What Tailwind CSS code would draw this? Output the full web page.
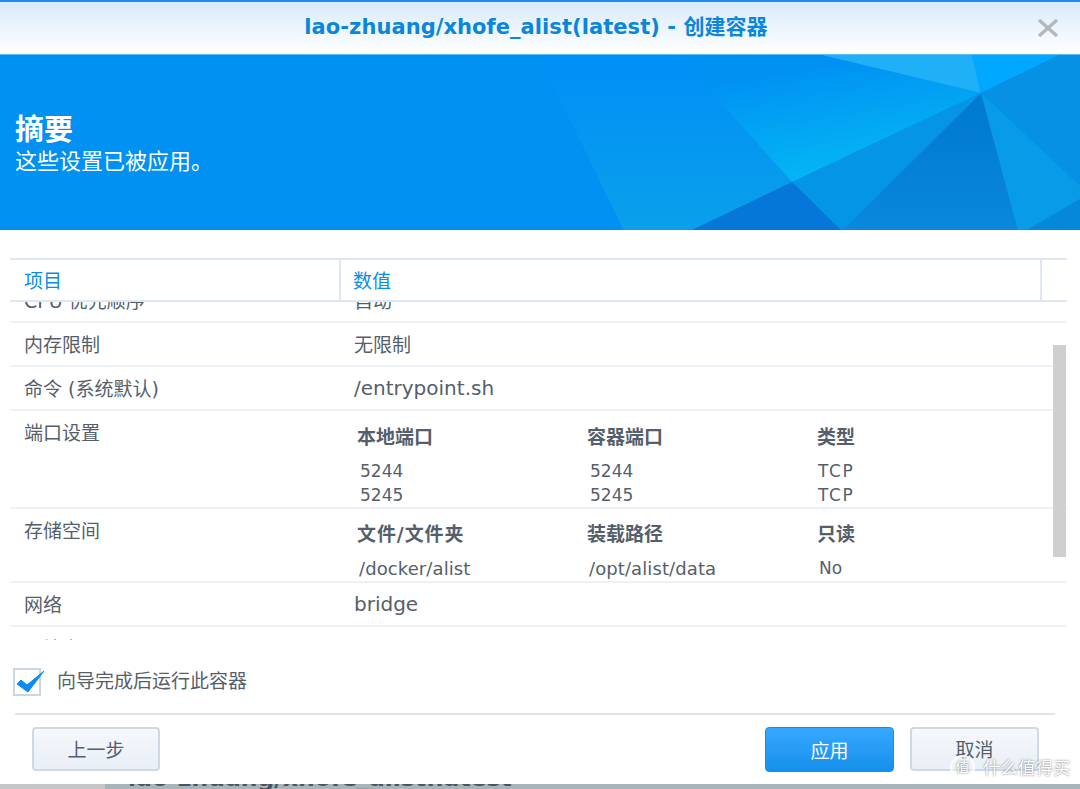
<!DOCTYPE html>
<html lang="en">
<head>
    <meta charset="UTF-8">
    <title>创建容器</title>
    <script src="https://cdn.jsdelivr.net/npm/@tailwindcss/browser@4"></script>
</head>
<body class="bg-white">
    <div class="relative flex flex-col w-[1080px] h-[789px] overflow-hidden bg-white font-['DejaVu_Sans','Noto_Sans_CJK_SC',sans-serif] text-[19px] text-[#555f6b]">
        <!-- Title bar -->
        <div class="relative flex items-center justify-center h-[54px] shrink-0 pr-[8px] border-t-2 border-[#1a8fee] bg-gradient-to-b from-[#d8ebfb] to-white">
            <h1 class="text-[21px] font-semibold tracking-[0.06px] text-[#0a86dc]">lao-zhuang/xhofe_alist(latest) - 创建容器</h1>
            <svg class="absolute right-[21px] top-[17px]" width="22" height="18" viewBox="0 0 22 18"><path d="M2 1 L20 17 M20 1 L2 17" stroke="#b4b8bc" stroke-width="3.4" fill="none"/></svg>
        </div>

        <!-- Banner -->
        <div class="relative flex flex-col justify-center h-[176px] shrink-0 pl-[15px] pt-[1px] overflow-hidden bg-[#0091f2] border-t border-[#5cbcf5]">
            <svg class="absolute inset-0" width="1080" height="176" viewBox="0 54 1080 176">
                <defs>
                    <linearGradient id="g1" x1="0" y1="0" x2="0" y2="1"><stop offset="0" stop-color="#008ff8"/><stop offset="1" stop-color="#0aa0ea"/></linearGradient>
                    <linearGradient id="g2" x1="0.2" y1="0" x2="0.6" y2="1"><stop offset="0.15" stop-color="#0091f3"/><stop offset="1" stop-color="#05baf4"/></linearGradient>
                    <linearGradient id="g3" x1="0" y1="0" x2="0" y2="1"><stop offset="0" stop-color="#0078d0"/><stop offset="1" stop-color="#0988dc"/></linearGradient>
                </defs>
                <polygon points="539,54 678,54 792,181 690,230 624,230" fill="url(#g1)"/>
                <polygon points="678,54 822,54 981,92 792,181" fill="url(#g2)"/>
                <polygon points="822,54 972,54 981,92" fill="#1fb0f8"/>
                <polygon points="972,54 1059,54 981,92" fill="#00a8ff"/>
                <polygon points="1059,54 1080,54 1080,185 981,92" fill="#0791e5"/>
                <polygon points="981,92 1080,185 1080,198 1025,230 1018,230" fill="#089ce8"/>
                <polygon points="981,92 1018,230 842,230" fill="url(#g3)"/>
                <polygon points="981,92 842,230 792,181" fill="#0595e6"/>
                <polygon points="792,181 842,230 690,230" fill="#0577d8"/>
                <polygon points="1080,198 1080,230 1025,230" fill="#0588d8"/>
            </svg>
            <div class="relative text-white">
                <h2 class="text-[29px] leading-[38px] font-bold">摘要</h2>
                <p class="text-[22px] leading-[26px]">这些设置已被应用。</p>
            </div>
        </div>

        <!-- Summary table -->
        <div class="relative mt-[28px] mx-[10px] w-[1057px]">
            <div class="flex h-[44px] border-t-2 border-b-2 border-[#dfe7f3] text-[#0a8ce8]">
                <div class="w-[331px] pl-[14px] pt-[2px] flex items-center border-r-2 border-[#dfe7f3]">项目</div>
                <div class="w-[701px] pl-[12px] pt-[2px] flex items-center border-r-2 border-[#dfe7f3]">数值</div>
            </div>
            <div class="relative h-[338px] overflow-hidden">
                <div class="mt-[-23px]">
                    <div class="grid grid-cols-[330px_1fr] h-[44px] px-[14px] items-center border-b-2 border-[#eef2f8]">
                        <div class="pt-[2px]">CPU 优先顺序</div>
                        <div class="pt-[2px]">自动</div>
                    </div>
                    <div class="grid grid-cols-[330px_1fr] h-[44px] px-[14px] items-center border-b-2 border-[#eef2f8]">
                        <div class="pt-[2px]">内存限制</div>
                        <div class="pt-[2px]">无限制</div>
                    </div>
                    <div class="grid grid-cols-[330px_1fr] h-[44px] px-[14px] items-center border-b-2 border-[#eef2f8]">
                        <div class="pt-[2px]">命令 (系统默认)</div>
                        <div class="text-[20px]">/entrypoint.sh</div>
                    </div>
                    <div class="grid grid-cols-[330px_1fr] h-[98px] px-[14px] border-b-2 border-[#eef2f8]">
                        <div class="h-[44px] flex items-center">端口设置</div>
                        <div class="pt-[12px] pl-[3px]">
                            <div class="grid grid-cols-[230px_230px_1fr] h-[24px] mb-[12px] items-center font-bold">
                                <div>本地端口</div><div>容器端口</div><div>类型</div>
                            </div>
                            <div class="grid grid-cols-[230px_230px_1fr] h-[24px] items-center text-[17px] pl-[3px]">
                                <div>5244</div><div>5244</div><div class="ml-[-2px] tracking-[1.6px]">TCP</div>
                            </div>
                            <div class="grid grid-cols-[230px_230px_1fr] h-[24px] items-center text-[17px] pl-[3px]">
                                <div>5245</div><div>5245</div><div class="ml-[-2px] tracking-[1.6px]">TCP</div>
                            </div>
                        </div>
                    </div>
                    <div class="grid grid-cols-[330px_1fr] h-[74px] px-[14px] border-b-2 border-[#eef2f8]">
                        <div class="h-[44px] flex items-center">存储空间</div>
                        <div class="pt-[11px] pl-[3px]">
                            <div class="grid grid-cols-[230px_230px_1fr] h-[24px] mb-[11px] items-center font-bold">
                                <div class="tracking-[0.9px]">文件/文件夹</div><div>装载路径</div><div>只读</div>
                            </div>
                            <div class="grid grid-cols-[230px_230px_1fr] h-[24px] items-center text-[18px] tracking-[0.1px] pl-[2px]">
                                <div>/docker/alist</div><div>/opt/alist/data</div><div class="pt-[1px] text-[17px]">No</div>
                            </div>
                        </div>
                    </div>
                    <div class="grid grid-cols-[330px_1fr] h-[44px] px-[14px] items-center border-b-2 border-[#eef2f8]">
                        <div class="pt-[2px]">网络</div>
                        <div class="text-[20px]">bridge</div>
                    </div>
                    <div class="grid grid-cols-[330px_1fr] h-[44px] px-[14px] items-center">
                        <div>环境变量</div>
                        <div></div>
                    </div>
                </div>
            </div>
            <!-- Scrollbar -->
            <div class="absolute right-[1px] top-[87px] w-[13px] h-[212px] bg-[#cfcfcf]"></div>
        </div>

        <!-- Run checkbox -->
        <div class="flex items-center h-[74px] pt-[10px] pl-[13px]">
            <div class="relative w-[28px] h-[28px] border-2 border-[#cbd6e4] bg-white">
                <svg class="absolute left-[1px] top-[-1px]" width="29" height="25" viewBox="0 0 29 25"><path d="M1 15 L5 11 L11 16 L28 2 L12 23 Z" fill="#0a8cf0" stroke="#0a8cf0" stroke-width="1" stroke-linejoin="round"/></svg>
            </div>
            <span class="ml-[16px]">向导完成后运行此容器</span>
        </div>

        <!-- Footer -->
        <div class="mx-[15px] w-[1040px] h-[2px] bg-[#e4e4e4]"></div>
        <div class="flex items-start h-[69px] pt-[12px] pl-[32px]">
            <button class="w-[128px] h-[44px] pt-[2px] rounded-[4px] border-2 border-[#ced9e6] bg-gradient-to-b from-[#f5f8fc] to-[#e9eff6]">上一步</button>
            <button class="ml-[605px] w-[129px] h-[45px] pt-[2px] rounded-[4px] border border-[#1b8ce6] text-white bg-gradient-to-b from-[#36a8ff] to-[#1390ec]">应用</button>
            <button class="ml-[16px] w-[129px] h-[44px] pt-[2px] rounded-[4px] border-2 border-[#ced9e6] bg-gradient-to-b from-[#f5f8fc] to-[#e9eff6]">取消</button>
        </div>

        <!-- Window behind the dialog -->
        <div class="flex h-[5px] shrink-0 overflow-hidden bg-[#a9b3ba]">
            <div class="w-[105px] bg-[#c4c6c8]"></div>
            <div class="ml-[23px] mt-[-20px] text-[23.5px] leading-[28px] font-bold whitespace-nowrap text-[#4a545e]">lao-zhuang/xhofe_alist:latest</div>
        </div>

        <!-- Watermark -->
        <div class="absolute left-[950px] top-[755px] flex items-center text-white [text-shadow:0_0_2px_rgba(70,70,70,0.8)]">
            <span class="w-[25px] h-[25px] rounded-full border-2 border-white/80 bg-white/30 flex items-center justify-center text-[14px]">值</span>
            <span class="ml-[8px] text-[17.5px] leading-[24px] whitespace-nowrap">什么值得买</span>
        </div>
    </div>
</body>
</html>
